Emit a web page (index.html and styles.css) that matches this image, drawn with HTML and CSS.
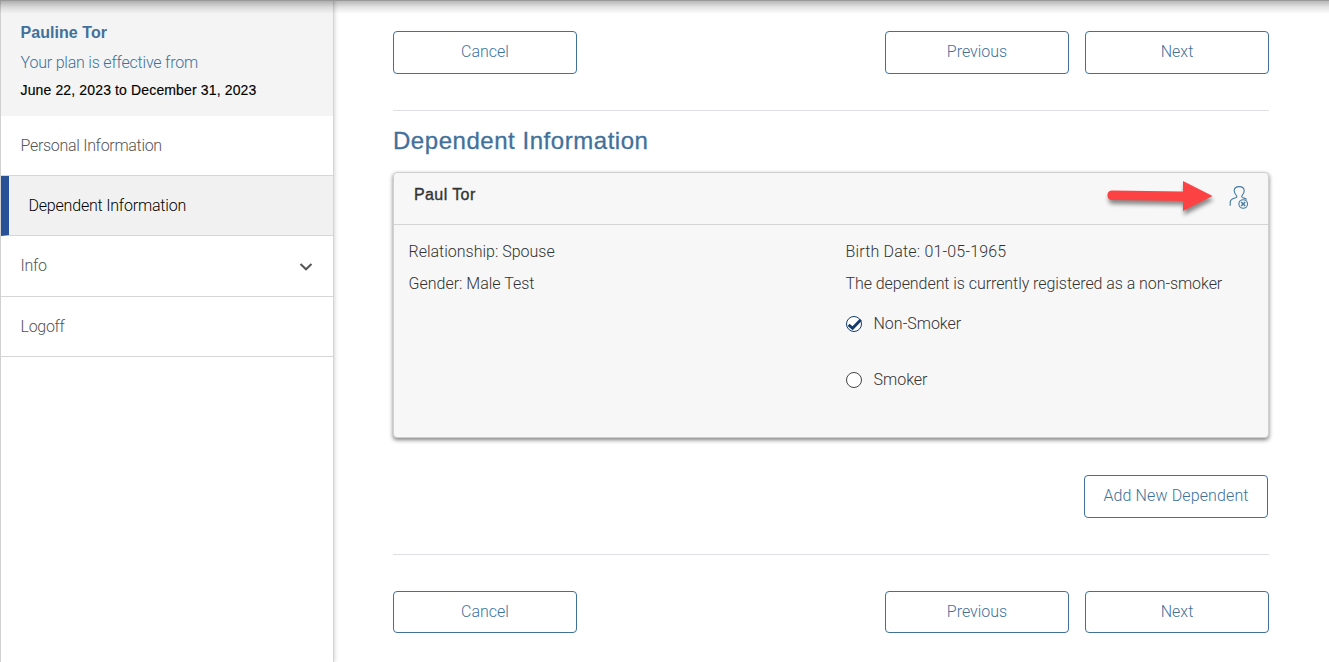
FILE: index.html
```html
<!DOCTYPE html>
<html lang="en">
<head>
<meta charset="utf-8">
<title>Dependent Information</title>
<link rel="stylesheet" href="styles.css">
</head>
<body>
<div class="topshadow"></div>
<div class="layout">
  <aside class="sidebar">
    <div class="profile">
      <div class="name"><span>Pauline Tor</span></div>
      <div class="plan"><span>Your plan is effective from</span></div>
      <div class="dates"><span>June 22, 2023 to December 31, 2023</span></div>
    </div>
    <nav class="menu">
      <a class="item"><span>Personal Information</span></a>
      <a class="item active"><span>Dependent Information</span></a>
      <a class="item info"><span>Info</span>
        <svg class="chevron" width="14" height="10" viewBox="0 0 14 10"><path d="M1.5 2 L7 7.3 L12.5 2" fill="none" stroke="#555" stroke-width="2"/></svg>
      </a>
      <a class="item"><span>Logoff</span></a>
    </nav>
  </aside>
  <main class="main">
    <div class="actions">
      <button class="btn"><span>Cancel</span></button>
      <div class="group"><button class="btn"><span>Previous</span></button><button class="btn"><span>Next</span></button></div>
    </div>
    <h1 class="title"><span>Dependent Information</span></h1>
    <section class="card">
      <header class="cardhead">
        <span class="cardname">Paul Tor</span>
        <svg class="arrow" width="114" height="42" viewBox="0 0 114 42">
          <path d="M7.5 15.5 L79 16.5 V6 L108.5 21 L79 36 V26 L7.5 25 A4.8 4.8 0 0 1 7.5 15.5 Z" fill="#fc4242"/>
        </svg>
        <svg class="remove" width="20" height="24" viewBox="0 0 20 24" fill="none" stroke="#4479a2" stroke-width="1.1">
          <path d="M1.2 20.8 V17.5 C1.2 14 4 13.6 6.6 12.8 C8.2 12.2 8.2 11.2 7.3 10.3 C5.8 8.7 5.2 7.6 5.2 5.8 C5.2 3.1 7.1 1.6 10.2 1.6 C13.3 1.6 15.2 3.1 15.2 5.8 C15.2 7.6 14.7 8.7 13.2 10.3 C12.3 11.2 12.4 12.2 14 12.8 C15.4 13.3 16.9 13.4 17.7 14.5"/>
          <circle cx="14.2" cy="19" r="4.3"/>
          <path d="M12.2 17 L16.2 21 M16.2 17 L12.2 21" stroke-width="1.4"/>
        </svg>
      </header>
      <div class="cardbody">
        <div class="col">
          <p><span class="rel">Relationship: Spouse</span></p>
          <p><span class="gender">Gender: Male Test</span></p>
        </div>
        <div class="col">
          <p><span class="birth">Birth Date: 01-05-1965</span></p>
          <p><span class="status">The dependent is currently registered as a non-smoker</span></p>
          <label class="radio first">
            <svg width="18" height="18" viewBox="0 0 18 18"><circle cx="9" cy="9" r="7.5" fill="#fff" stroke="#153a6b"/><path d="M3.6 9.8 L7.6 13.3 L15.8 4.7" fill="none" stroke="#153a6b" stroke-width="2.9"/></svg>
            <span>Non-Smoker</span>
          </label>
          <label class="radio">
            <svg width="18" height="18" viewBox="0 0 18 18"><circle cx="9" cy="9" r="7.5" fill="#fff" stroke="#454545"/></svg>
            <span>Smoker</span>
          </label>
        </div>
      </div>
    </section>
    <div class="add"><button class="btn"><span>Add New Dependent</span></button></div>
    <div class="actions bottom">
      <button class="btn"><span>Cancel</span></button>
      <div class="group"><button class="btn"><span>Previous</span></button><button class="btn"><span>Next</span></button></div>
    </div>
  </main>
</div>
</body>
</html>
```
FILE: styles.css
```css
* { box-sizing: border-box; }
body {
  margin: 0;
  height: 662px;
  overflow: hidden;
  background: #fff;
  color: #333;
  font: 300 16px/24px Roboto, "Liberation Sans", sans-serif;
}
.topshadow {
  position: absolute;
  inset: 0 0 auto 0;
  height: 14px;
  border-top: 1px solid #999;
  background: linear-gradient(rgba(0,0,0,.28), rgba(0,0,0,.1) 50%, rgba(0,0,0,0));
}
.layout { display: flex; height: 662px; }
.sidebar {
  width: 334px;
  border-left: 1px solid #d0d0d0;
  border-right: 1px solid #d4d4d4;
  box-shadow: 1px 0 4px rgba(0,0,0,.16);
}
.profile { height: 116px; padding: 21px 19.5px 0; background: #f4f4f4; color: #41719a; }
.name { font: 700 16px/24px "Liberation Sans", Arial, sans-serif; letter-spacing: .05px; }
.plan { margin-top: 6px; letter-spacing: -.2px; }
.dates { margin-top: 3px; color: #000; font: 400 14px/25px "Liberation Sans", Arial, sans-serif; letter-spacing: .14px; -webkit-text-stroke: .15px #000; }
.item {
  display: flex;
  align-items: center;
  justify-content: space-between;
  height: 60px;
  padding: 0 20px 0 19.5px;
  border-bottom: 1px solid #d6d6d6;
  color: #555;
  letter-spacing: -.3px;
}
.item.active { border-left: 8px solid #295196; background: #f1f1f1; color: #000; letter-spacing: -.2px; }
.item.info { height: 61px; }
.chevron { margin-top: 1px; }
.main { width: 876px; margin-left: 59px; }
.actions { display: flex; justify-content: space-between; height: 111px; padding-top: 31px; border-bottom: 1px solid #dedfe6; }
.group { display: flex; gap: 16px; }
.btn {
  width: 184px;
  height: 43px;
  padding: 0 0 2px;
  border: 1px solid #41719a;
  border-radius: 4px;
  background: #fff;
  color: #41719a;
  font: inherit;
}
.title { margin: 14px 0 0; color: #41719a; font: 400 24px/32px "Liberation Sans", Arial, sans-serif; letter-spacing: .54px; -webkit-text-stroke: .3px #41719a; }
.card {
  height: 266px;
  margin-top: 15px;
  border: 1px solid #cfcfcf;
  border-radius: 4px;
  background: #f7f7f7;
  box-shadow: 0 2px 4px rgba(0,0,0,.5);
}
.cardhead { display: flex; height: 52px; padding: 0 19px 0 20px; border-bottom: 1px solid #d4d4d4; }
.cardname { flex: 1; padding-top: 10px; font: 400 16px/24px "Liberation Sans", Arial, sans-serif; letter-spacing: .4px; -webkit-text-stroke: .35px #333; }
.arrow { margin: 2px 11px 0 0; filter: drop-shadow(1px 4px 2px rgba(0,0,0,.45)); }
.remove { margin-top: 12px; }
.cardbody { display: grid; grid-template-columns: 437px 1fr; padding: 11px 0 0 14.5px; }
.cardbody p { margin: 4px 0 8px; }
.birth { letter-spacing: .18px; }
.status { letter-spacing: -.06px; }
.radio { display: flex; align-items: center; gap: 10.6px; height: 24px; margin-left: -.6px; }
.radio.first { margin: 16px 0 32px -.6px; }
.add { display: flex; justify-content: flex-end; padding: 37px 1px 0 0; height: 116px; }
.add span { letter-spacing: .12px; }
.actions.bottom { height: auto; padding-top: 36px; border: 0; border-top: 1px solid #dedfe6; }
.bottom .btn { height: 42px; padding-bottom: 1px; }
```
